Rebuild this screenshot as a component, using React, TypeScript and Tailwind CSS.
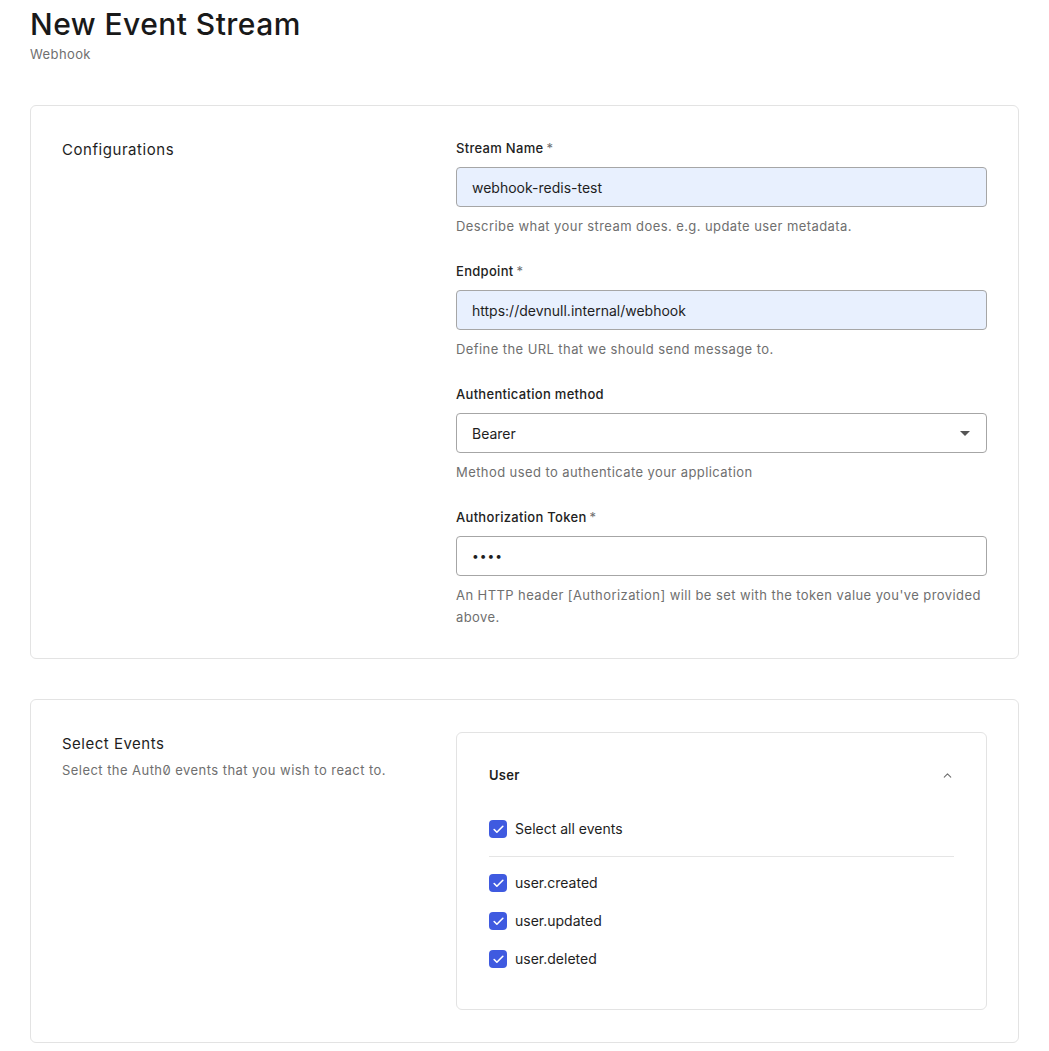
import { ChevronUp, Check } from 'lucide-react';

const fields = [
  { label: 'Stream Name', required: true, value: 'webhook-redis-test', filled: true, help: 'Describe what your stream does. e.g. update user metadata.' },
  { label: 'Endpoint', required: true, value: 'https://devnull.internal/webhook', filled: true, help: 'Define the URL that we should send message to.' },
  { label: 'Authentication method', required: false, value: 'Bearer', select: true, help: 'Method used to authenticate your application' },
  { label: 'Authorization Token', required: true, value: '••••', secret: true, help: "An HTTP header [Authorization] will be set with the token value you've provided above." },
];

const events = ['user.created', 'user.updated', 'user.deleted'];

function Box() {
  return (
    <span className="flex h-[18px] w-[18px] shrink-0 items-center justify-center rounded-[4px] bg-[#3f5ae0]">
      <Check size={13} strokeWidth={3} className="text-white" />
    </span>
  );
}

export default function App() {
  return (
    <div
      className="min-h-screen bg-white px-[30px] pt-[6px] pb-[8px] text-[#1e1e1e] [font-feature-settings:'zero']"
      style={{ fontFamily: 'Inter, "Noto Sans", sans-serif' }}
    >
      {/* Header */}
      <h1 className="text-[30px] leading-[36px] font-medium tracking-[0.45px] text-[#191919]">New Event Stream</h1>
      <div className="mt-[3px] text-[13px] leading-[18px] tracking-[0.4px] text-[#6f6f6f]">Webhook</div>

      {/* Configurations */}
      <section className="mt-[42px] flex rounded-[6px] border border-[#e3e3e3] px-[31px] pt-[32px] pb-[30px]">
        <div className="w-[394px] shrink-0 text-[15px] leading-[24px] tracking-[0.55px]">Configurations</div>
        <div className="flex-1">
          {fields.map((f, i) => (
            <div key={f.label} className={i < fields.length - 1 ? 'mb-[24px]' : ''}>
              <div className="mb-[9px] text-[13px] leading-[20px] font-medium tracking-[0.3px] text-[#222]">
                {f.label}
                {f.required && <span className="ml-[3px] font-normal text-[#6f6f6f]">*</span>}
              </div>
              <div
                className={`flex h-[40px] items-center justify-between rounded-[4px] border border-[#a6a6a6] px-[15px] text-[14px] ${
                  f.filled ? 'bg-[#e8f0fe]' : 'bg-white'
                }`}
              >
                <span className={f.secret ? 'text-[12px] tracking-[1px]' : ''}>{f.value}</span>
                {f.select && (
                  <svg width="10" height="5" viewBox="0 0 10 5" className="mr-[1px]">
                    <path d="M0 0h10L5 5z" fill="#555" />
                  </svg>
                )}
              </div>
              <p className="mt-[8px] text-[13px] leading-[22px] tracking-[0.42px] text-[#6f6f6f]">{f.help}</p>
            </div>
          ))}
        </div>
      </section>

      {/* Select Events */}
      <section className="mt-[40px] flex rounded-[6px] border border-[#e3e3e3] px-[31px] py-[32px]">
        <div className="w-[394px] shrink-0">
          <div className="text-[15px] leading-[24px] tracking-[0.5px]">Select Events</div>
          <div className="mt-[4px] text-[13px] leading-[20px] tracking-[0.45px] text-[#6f6f6f]">
            Select the Auth0 events that you wish to react to.
          </div>
        </div>
        <div className="flex-1 rounded-[6px] border border-[#e3e3e3] px-[32px] pt-[32px] pb-[40px]">
          <div className="flex items-center justify-between">
            <span className="text-[13px] leading-[20px] font-semibold tracking-[0.3px]">User</span>
            <ChevronUp size={13} strokeWidth={2} className="mr-0 text-[#6f6f6f]" />
          </div>
          <label className="mt-[34px] flex items-center gap-[8px] text-[14px] leading-[20px]">
            <Box />
            Select all events
          </label>
          <div className="mt-[17px] h-px bg-[#e5e5e5]" />
          <div className="mt-[16px] flex flex-col gap-[18px]">
            {events.map(e => (
              <label key={e} className="flex items-center gap-[8px] text-[14px] leading-[20px]">
                <Box />
                {e}
              </label>
            ))}
          </div>
        </div>
      </section>
    </div>
  );
}
